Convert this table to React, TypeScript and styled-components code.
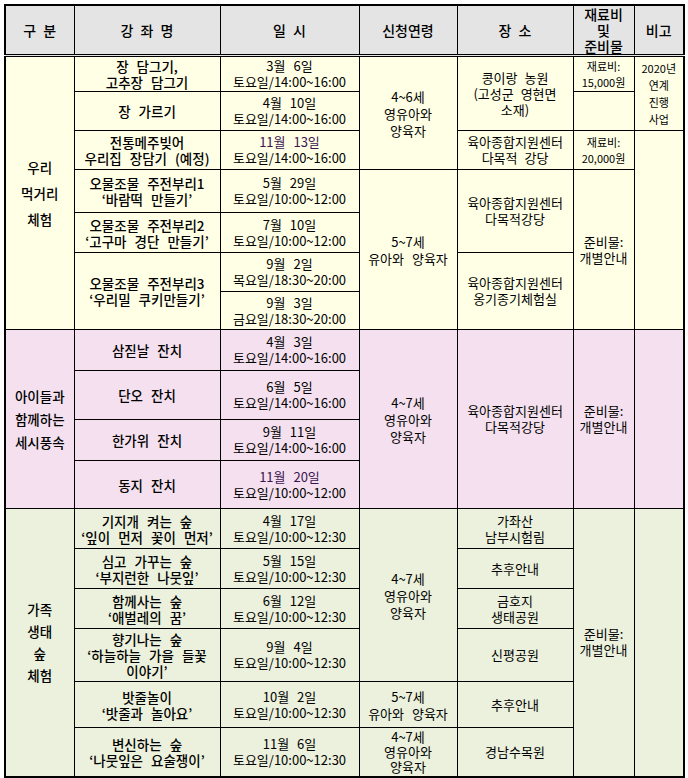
import React from "react";
import styled, { createGlobalStyle } from "styled-components";

const GlobalStyle = createGlobalStyle`
  body {
    margin: 0;
    background: #fff;
    color: #000;
    font-family: "Noto Sans CJK KR", "Noto Sans", sans-serif;
  }
`;

const ZONE = {
  head: "#e4e4e4",
  food: "#ffffe6",
  season: "#f4e0ef",
  forest: "#ebf1dc",
};

const Page = styled.div`
  padding: 4px 0 0 4px;
`;

const Table = styled.table`
  width: 679px;
  border-collapse: collapse;
  table-layout: fixed;
  border: 2px solid #000;
`;

const Row = styled.tr<{ $zone: keyof typeof ZONE; $h: number }>`
  background: ${(p) => ZONE[p.$zone]};
  height: ${(p) => p.$h}px;
`;

const Head = styled.th`
  border: 1px solid #000;
  border-bottom: 3px double #000;
  padding: 0;
  font-size: 14px;
  font-weight: 500;
  line-height: 16px;
  word-spacing: 4px;
  text-align: center;
  vertical-align: middle;
`;

type Kind = "group" | "title" | "date" | "age" | "place" | "note";

const SIZES: Record<Kind, string> = {
  group: "font-size: 13.5px; font-weight: 500;",
  title: "font-size: 13.5px; font-weight: 500; line-height: 16px; word-spacing: 5px;",
  date: "font-size: 13px; line-height: 16px; word-spacing: 5px;",
  age: "font-size: 13px; line-height: 17px; word-spacing: 5px;",
  place: "font-size: 13px; line-height: 16px; word-spacing: 4px;",
  note: "font-size: 11px; line-height: 16px;",
};

const Cell = styled.td<{ $kind: Kind; $lh?: number }>`
  border: 1px solid #000;
  padding: 0 2px;
  text-align: center;
  vertical-align: middle;
  white-space: nowrap;
  ${(p) => SIZES[p.$kind]}
  ${(p) => (p.$lh ? `line-height: ${p.$lh}px;` : "")}
`;

const Day = styled.span<{ $ink?: string }>`
  color: ${(p) => p.$ink ?? "#000"};
`;

const PURPLE = "#3b1650";

const Date = ({ day, time, ink }: { day: string; time: string; ink?: string }) => (
  <Cell $kind="date">
    <Day $ink={ink}>{day}</Day>
    <br />
    {time}
  </Cell>
);

export default function App() {
  return (
    <Page>
      <GlobalStyle />
      <Table>
        <colgroup>
          <col style={{ width: 69 }} />
          <col style={{ width: 146 }} />
          <col style={{ width: 139 }} />
          <col style={{ width: 98 }} />
          <col style={{ width: 116 }} />
          <col style={{ width: 61 }} />
          <col style={{ width: 50 }} />
        </colgroup>
        <thead>
          <Row $zone="head" $h={48}>
            <Head>구 분</Head>
            <Head>강 좌 명</Head>
            <Head>일 시</Head>
            <Head>신청연령</Head>
            <Head>장 소</Head>
            <Head>
              재료비
              <br />및<br />
              준비물
            </Head>
            <Head>비고</Head>
          </Row>
        </thead>
        <tbody>
          {/* 우리 먹거리 체험 */}
          <Row $zone="food" $h={36}>
            <Cell $kind="group" rowSpan={7} $lh={26}>
              우리
              <br />
              먹거리
              <br />
              체험
            </Cell>
            <Cell $kind="title">
              장 담그기,
              <br />
              고추장 담그기
            </Cell>
            <Date day="3월 6일" time="토요일/14:00~16:00" />
            <Cell $kind="age" rowSpan={3}>
              4~6세
              <br />
              영유아와
              <br />
              양육자
            </Cell>
            <Cell $kind="place" rowSpan={2}>
              콩이랑 농원
              <br />
              (고성군 영현면
              <br />
              소재)
            </Cell>
            <Cell $kind="note">
              재료비:
              <br />
              15,000원
            </Cell>
            <Cell $kind="note" rowSpan={2} $lh={17}>
              2020년
              <br />
              연계
              <br />
              진행
              <br />
              사업
            </Cell>
          </Row>
          <Row $zone="food" $h={39}>
            <Cell $kind="title">장 가르기</Cell>
            <Date day="4월 10일" time="토요일/14:00~16:00" />
            <Cell $kind="note" />
          </Row>
          <Row $zone="food" $h={39}>
            <Cell $kind="title">
              전통메주빚어
              <br />
              우리집 장담기 (예정)
            </Cell>
            <Date day="11월 13일" time="토요일/14:00~16:00" ink={PURPLE} />
            <Cell $kind="place">
              육아종합지원센터
              <br />
              다목적 강당
            </Cell>
            <Cell $kind="note">
              재료비:
              <br />
              20,000원
            </Cell>
            <Cell $kind="note" rowSpan={5} />
          </Row>
          <Row $zone="food" $h={43}>
            <Cell $kind="title">
              오물조물 주전부리1
              <br />
              ‘바람떡 만들기’
            </Cell>
            <Date day="5월 29일" time="토요일/10:00~12:00" />
            <Cell $kind="age" rowSpan={4}>
              5~7세
              <br />
              유아와 양육자
            </Cell>
            <Cell $kind="place" rowSpan={2}>
              육아종합지원센터
              <br />
              다목적강당
            </Cell>
            <Cell $kind="place" rowSpan={4}>
              준비물:
              <br />
              개별안내
            </Cell>
          </Row>
          <Row $zone="food" $h={40}>
            <Cell $kind="title">
              오물조물 주전부리2
              <br />
              ‘고구마 경단 만들기’
            </Cell>
            <Date day="7월 10일" time="토요일/10:00~12:00" />
          </Row>
          <Row $zone="food" $h={39}>
            <Cell $kind="title" rowSpan={2}>
              오물조물 주전부리3
              <br />
              ‘우리밀 쿠키만들기’
            </Cell>
            <Date day="9월 2일" time="목요일/18:30~20:00" />
            <Cell $kind="place" rowSpan={2}>
              육아종합지원센터
              <br />
              옹기종기체험실
            </Cell>
          </Row>
          <Row $zone="food" $h={38}>
            <Date day="9월 3일" time="금요일/18:30~20:00" />
          </Row>

          {/* 아이들과 함께하는 세시풍속 */}
          <Row $zone="season" $h={41}>
            <Cell $kind="group" rowSpan={4} $lh={23}>
              아이들과
              <br />
              함께하는
              <br />
              세시풍속
            </Cell>
            <Cell $kind="title">삼짇날 잔치</Cell>
            <Date day="4월 3일" time="토요일/14:00~16:00" />
            <Cell $kind="age" rowSpan={4}>
              4~7세
              <br />
              영유아와
              <br />
              양육자
            </Cell>
            <Cell $kind="place" rowSpan={4}>
              육아종합지원센터
              <br />
              다목적강당
            </Cell>
            <Cell $kind="place" rowSpan={4}>
              준비물:
              <br />
              개별안내
            </Cell>
            <Cell $kind="note" rowSpan={4} />
          </Row>
          <Row $zone="season" $h={49}>
            <Cell $kind="title">단오 잔치</Cell>
            <Date day="6월 5일" time="토요일/14:00~16:00" />
          </Row>
          <Row $zone="season" $h={41}>
            <Cell $kind="title">한가위 잔치</Cell>
            <Date day="9월 11일" time="토요일/14:00~16:00" />
          </Row>
          <Row $zone="season" $h={48}>
            <Cell $kind="title">동지 잔치</Cell>
            <Date day="11월 20일" time="토요일/10:00~12:00" ink={PURPLE} />
          </Row>

          {/* 가족 생태 숲 체험 */}
          <Row $zone="forest" $h={40}>
            <Cell $kind="group" rowSpan={6} $lh={22}>
              가족
              <br />
              생태
              <br />숲<br />
              체험
            </Cell>
            <Cell $kind="title">
              기지개 켜는 숲
              <br />
              ‘잎이 먼저 꽃이 먼저’
            </Cell>
            <Date day="4월 17일" time="토요일/10:00~12:30" />
            <Cell $kind="age" rowSpan={4}>
              4~7세
              <br />
              영유아와
              <br />
              양육자
            </Cell>
            <Cell $kind="place">
              가좌산
              <br />
              남부시험림
            </Cell>
            <Cell $kind="place" rowSpan={6}>
              준비물:
              <br />
              개별안내
            </Cell>
            <Cell $kind="note" rowSpan={6} />
          </Row>
          <Row $zone="forest" $h={40}>
            <Cell $kind="title">
              심고 가꾸는 숲
              <br />
              ‘부지런한 나뭇잎’
            </Cell>
            <Date day="5월 15일" time="토요일/10:00~12:30" />
            <Cell $kind="place">추후안내</Cell>
          </Row>
          <Row $zone="forest" $h={40}>
            <Cell $kind="title">
              함께사는 숲
              <br />
              ‘애벌레의 꿈’
            </Cell>
            <Date day="6월 12일" time="토요일/10:00~12:30" />
            <Cell $kind="place">
              금호지
              <br />
              생태공원
            </Cell>
          </Row>
          <Row $zone="forest" $h={53}>
            <Cell $kind="title">
              향기나는 숲
              <br />
              ‘하늘하늘 가을 들꽃
              <br />
              이야기’
            </Cell>
            <Date day="9월 4일" time="토요일/10:00~12:30" />
            <Cell $kind="place">신평공원</Cell>
          </Row>
          <Row $zone="forest" $h={46}>
            <Cell $kind="title">
              밧줄놀이
              <br />
              ‘밧줄과 놀아요’
            </Cell>
            <Date day="10월 2일" time="토요일/10:00~12:30" />
            <Cell $kind="age">
              5~7세
              <br />
              유아와 양육자
            </Cell>
            <Cell $kind="place">추후안내</Cell>
          </Row>
          <Row $zone="forest" $h={49}>
            <Cell $kind="title">
              변신하는 숲
              <br />
              ‘나뭇잎은 요술쟁이’
            </Cell>
            <Date day="11월 6일" time="토요일/10:00~12:30" />
            <Cell $kind="age" $lh={15}>
              4~7세
              <br />
              영유아와
              <br />
              양육자
            </Cell>
            <Cell $kind="place">경남수목원</Cell>
          </Row>
        </tbody>
      </Table>
    </Page>
  );
}
